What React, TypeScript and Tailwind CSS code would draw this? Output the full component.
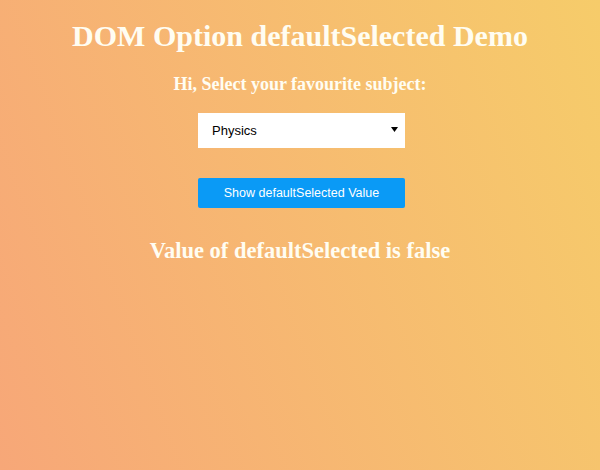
import { useState } from "react";

const subjects = ["Physics", "Chemistry", "Mathematics", "Biology"];

export default function App() {
  const [subject, setSubject] = useState("Physics");
  const [result] = useState("Value of defaultSelected is false");

  return (
    <div className="w-[600px] h-[470px] overflow-hidden bg-[linear-gradient(70deg,#f7a778,#f6cc6a)] font-['Liberation_Serif',serif] text-[#fffdf2]">
      <div className="flex flex-col items-center pt-[21px]">
        <h1 className="text-[30px] leading-none font-bold">DOM Option defaultSelected Demo</h1>
        <h3 className="mt-[24px] text-[18px] leading-none font-bold">Hi, Select your favourite subject:</h3>

        {/* select box */}
        <div className="relative mt-[20px] ml-[3px] w-[207px] h-[35px]">
          <select
            value={subject}
            onChange={(e) => setSubject(e.target.value)}
            className="appearance-none w-full h-full bg-white text-black pl-[14px] pr-6 text-[13px] font-['Liberation_Sans',Arial,sans-serif] outline-none border-0 rounded-none"
          >
            {subjects.map((s) => (
              <option key={s} value={s}>
                {s}
              </option>
            ))}
          </select>
          <svg
            className="pointer-events-none absolute right-[7px] top-[14px]"
            width="7"
            height="5"
            viewBox="0 0 7 5"
          >
            <polygon points="0,0 7,0 3.5,5" fill="#000" />
          </svg>
        </div>

        <button className="mt-[30px] ml-[3px] w-[207px] h-[30px] bg-[#0a9af6] text-white text-[12.5px] font-['Liberation_Sans',Arial,sans-serif] rounded-[2px]">
          Show defaultSelected Value
        </button>

        <h2 className="mt-[32px] text-[22.5px] leading-none font-bold">{result}</h2>
      </div>
    </div>
  );
}
